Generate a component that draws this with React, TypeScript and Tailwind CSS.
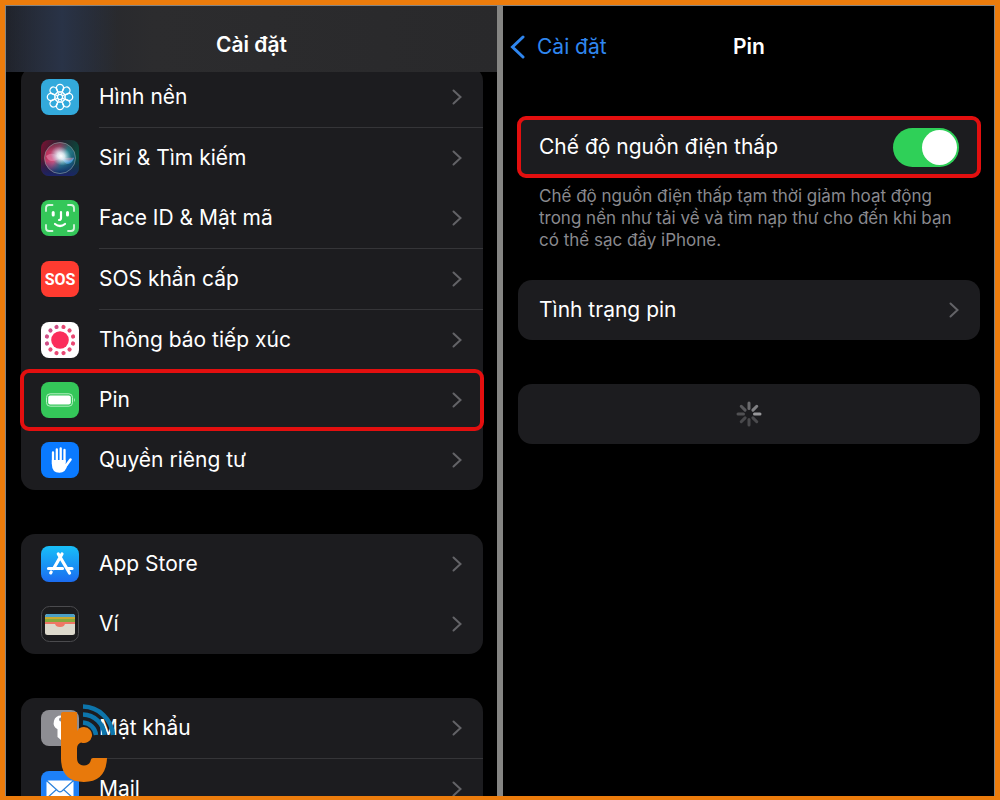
import { useState, type ReactNode } from "react";

const tile = "h-9 w-[38px] shrink-0";

function WallpaperIcon() {
  const petals = [0, 45, 90, 135, 180, 225, 270, 315];
  return (
    <svg viewBox="0 0 38 36" className={tile} aria-hidden="true">
      <rect width="38" height="36" rx="8" fill="#33aadc" />
      <g fill="none" stroke="#fff" strokeWidth="1.3">
        {petals.map((a) => (
          <ellipse key={a} cx="19" cy="9.2" rx="3.6" ry="3.9" transform={`rotate(${a} 19 18)`} />
        ))}
        {petals.map((a) => (
          <circle key={a} cx="19" cy="14.2" r="1.5" strokeWidth="0.8" transform={`rotate(${a} 19 18)`} />
        ))}
        <circle cx="19" cy="18" r="2.6" />
      </g>
    </svg>
  );
}

function SiriIcon() {
  return (
    <svg viewBox="0 0 38 36" className={tile} aria-hidden="true">
      <defs>
        <linearGradient id="siri-bg" x1="0" y1="0" x2="1" y2="0.3">
          <stop offset="0" stopColor="#7c1233" />
          <stop offset="0.5" stopColor="#25202f" />
          <stop offset="1" stopColor="#0b4a3c" />
        </linearGradient>
        <linearGradient id="siri-low" x1="0" y1="0" x2="0" y2="1">
          <stop offset="0.5" stopColor="#1b1c50" stopOpacity="0" />
          <stop offset="1" stopColor="#1c2468" />
        </linearGradient>
        <linearGradient id="siri-orb" x1="0" y1="0.2" x2="1" y2="0.6">
          <stop offset="0" stopColor="#b3264f" />
          <stop offset="0.4" stopColor="#cc5480" />
          <stop offset="0.65" stopColor="#2c8791" />
          <stop offset="1" stopColor="#124e67" />
        </linearGradient>
        <linearGradient id="siri-shade" x1="0" y1="0" x2="0" y2="1">
          <stop offset="0" stopColor="#21252c" stopOpacity="0.6" />
          <stop offset="0.3" stopColor="#21252c" stopOpacity="0" />
          <stop offset="0.6" stopColor="#1b3b80" stopOpacity="0" />
          <stop offset="1" stopColor="#112a62" />
        </linearGradient>
        <radialGradient id="siri-glow">
          <stop offset="0" stopColor="#fff" />
          <stop offset="0.35" stopColor="#ecf6fa" stopOpacity="0.85" />
          <stop offset="1" stopColor="#a9d6e8" stopOpacity="0" />
        </radialGradient>
      </defs>
      <rect width="38" height="36" rx="8" fill="url(#siri-bg)" />
      <rect width="38" height="36" rx="8" fill="url(#siri-low)" />
      <circle cx="19" cy="18" r="15.5" fill="url(#siri-orb)" />
      <circle cx="19" cy="18" r="15.5" fill="url(#siri-shade)" />
      <path d="M5 16c7-5 11 0 15 1 5 2 9 0 13 1-4 7-9 4-13 1-5 0-11 6-15-3Z" fill="#f295bd" opacity="0.5" />
      <path d="M21 17c6 6 10 3 12 0-1 8-10 10-12 0Z" fill="#4aa9ef" opacity="0.7" />
      <ellipse cx="20" cy="16" rx="11" ry="9" fill="url(#siri-glow)" transform="rotate(35 20 16)" />
      <circle cx="19" cy="18" r="15.5" fill="none" stroke="#91a1a5" strokeWidth="0.8" opacity="0.75" />
    </svg>
  );
}

function FaceIdIcon() {
  return (
    <svg viewBox="0 0 38 36" className={tile} aria-hidden="true">
      <rect width="38" height="36" rx="8" fill="#34c759" />
      <g fill="none" stroke="#fff" strokeLinecap="round">
        <path
          d="M5 11V8q0-3 3-3h3.5M27 5h3q3 0 3 3v3M33 25v3q0 3-3 3h-3M11.500 31H8q-3 0-3-3v-3"
          strokeWidth="1.8"
          opacity="0.8"
        />
        <path d="M12.2 12.500v2.500M26.500 12.500v2.500" strokeWidth="3" />
        <path d="M20 12v6q0 2-2 2M14 24q5 4 10 0" strokeWidth="2.200" />
      </g>
    </svg>
  );
}

function SosIcon() {
  return (
    <svg viewBox="0 0 38 36" className={tile} aria-hidden="true">
      <rect width="38" height="36" rx="8" fill="#ff3b30" />
      <text
        x="19"
        y="24"
        fill="#fff"
        textAnchor="middle"
        fontSize="16"
        fontWeight="700"
        fontFamily="Roboto, sans-serif"
      >
        SOS
      </text>
    </svg>
  );
}

function ExposureIcon() {
  return (
    <svg viewBox="0 0 38 36" className={tile} aria-hidden="true">
      <rect width="38" height="36" rx="8" fill="#fff" />
      <circle cx="19" cy="18" r="8.8" fill="#fb2d5b" />
      {Array.from({ length: 12 }, (_, i) => (
        <circle
          key={i}
          cx="19"
          cy="4.500"
          r="2.100"
          fill={i > 7 ? "#cf4d86" : "#e84873"}
          transform={`rotate(${15 + i * 30} 19 18)`}
        />
      ))}
    </svg>
  );
}

function BatteryIcon() {
  return (
    <svg viewBox="0 0 38 36" className={tile} aria-hidden="true">
      <rect width="38" height="36" rx="8" fill="#34c759" />
      <rect x="5.500" y="11.800" width="26" height="12.400" rx="3.600" fill="none" stroke="#b9efc6" />
      <rect x="7.200" y="13.500" width="22.600" height="9" rx="2" fill="#fff" />
      <path d="M33 15.800q1.800 2.200 0 4.400Z" fill="#b9efc6" />
    </svg>
  );
}

function PrivacyIcon() {
  return (
    <svg viewBox="0 0 38 36" className={tile} aria-hidden="true">
      <rect width="38" height="36" rx="8" fill="#0a7aff" />
      <g fill="none" stroke="#fff" strokeWidth="2.300" strokeLinecap="round">
        <path d="M12 10.500V22M15.800 7.500V20M19.700 6.300V20M23.500 8V20" />
        <path d="m25.500 23 4-5.500" strokeWidth="2.600" />
      </g>
      <path d="M10.850 18h13.800v4l1.800 1q-1.700 7.800-8 7.800-7.600 0-7.600-8.800Z" fill="#fff" />
    </svg>
  );
}

function AppStoreIcon() {
  return (
    <svg viewBox="0 0 38 36" className={tile} aria-hidden="true">
      <defs>
        <linearGradient id="store-bg" x1="0" y1="0" x2="0" y2="1">
          <stop offset="0" stopColor="#18bff8" />
          <stop offset="1" stopColor="#1b6cf0" />
        </linearGradient>
      </defs>
      <rect width="38" height="36" rx="8" fill="url(#store-bg)" />
      <g fill="none" stroke="#fff" strokeWidth="3.200" strokeLinecap="round">
        <path d="M17.300 8 28.500 27M21 8l-8.300 14.500M10.200 26l-.5.800" />
        <path d="M7.500 22.500h14M27 22.500h4" />
      </g>
    </svg>
  );
}

function WalletIcon() {
  return (
    <svg viewBox="0 0 38 36" className={tile} aria-hidden="true">
      <rect x="0.500" y="0.500" width="37" height="35" rx="8" fill="#1b1b1d" stroke="#4b4b4e" />
      <rect x="4" y="8" width="30" height="21" rx="2.500" fill="#ddd9cc" />
      <path d="M4 12v-1.500Q4 8 6.500 8h25Q34 8 34 10.500V12Z" fill="#4a9fc5" />
      <path d="M4 11h30v3H4Z" fill="#c9a92e" />
      <path d="M4 13h30v3H4Z" fill="#86a83c" />
      <path d="M4 16h30v2H4Z" fill="#ef7765" />
      <path d="M14 17h10q0 4-5 4t-5-4Z" fill="#ef7765" />
    </svg>
  );
}

function KeyIcon() {
  return (
    <svg viewBox="0 0 38 36" className={tile} aria-hidden="true">
      <rect width="38" height="36" rx="8" fill="#8e8e93" />
      <path d="M20 5.500a7.300 7.300 0 0 0-3.500 13.700V27l3.500 3 3-3v-3l-2-2 2-2v-1A7.300 7.300 0 0 0 20 5.500Z" fill="#fff" />
      <circle cx="20" cy="9.500" r="2" fill="#8e8e93" />
    </svg>
  );
}

function MailIcon() {
  return (
    <svg viewBox="0 0 38 36" className={tile} aria-hidden="true">
      <rect width="38" height="36" rx="8" fill="#1d80f7" />
      <rect x="5.500" y="9.500" width="27" height="18" rx="2" fill="#fff" />
      <path
        d="m6 10 11 10q2 1.600 4 0l11-10M6 27l9.500-8.500M32 27l-9.500-8.500"
        fill="none"
        stroke="#2c83dc"
        strokeWidth="1.200"
      />
    </svg>
  );
}

function Chevron() {
  return (
    <svg viewBox="0 0 10 16" className="h-4 w-[10px] shrink-0" aria-hidden="true">
      <path d="m1.500 1.500 7 6.500-7 6.500" fill="none" stroke="#636367" strokeWidth="2" strokeLinecap="round" />
    </svg>
  );
}

function Spinner() {
  const shades = ["#6a6a6d", "#808083", "#98989b", "#4a4a4d", "#49494c", "#48484b", "#505053", "#58585b"];
  return (
    <svg viewBox="0 0 26 26" className="size-[26px]" role="img" aria-label="Đang tải">
      {shades.map((shade, i) => (
        <path
          key={i}
          d="M13 2v5.500"
          stroke={shade}
          strokeWidth="3"
          strokeLinecap="round"
          transform={`rotate(${i * 45} 13 13)`}
        />
      ))}
    </svg>
  );
}

function Logo() {
  return (
    <svg
      viewBox="0 0 60 80"
      className="pointer-events-none absolute bottom-[13px] left-[53px] z-20 h-20 w-[60px]"
      aria-hidden="true"
    >
      <g fill="none" stroke="#0d75ab" strokeWidth="4.500">
        <path d="M24 3.500a31 31 0 0 1 30 28.500" />
        <path d="M24 11.500a22 22 0 0 1 21.500 20.500" />
        <path d="M24 19.500a14 14 0 0 1 13 12.500" />
      </g>
      <path
        d="M2 11Q2 9 4 9h13q1 0 1 1v18q2-4 7-4a8 8 0 1 1-3 15.400q-4 1.600-4 6v9q0 8 7 8 6 0 7-6 0-1.500 2-1.500h14q-1 24-23 24Q2 79 2 55Z"
        fill="#e8790b"
      />
    </svg>
  );
}

type Item = { label: string; icon: ReactNode; divider?: boolean; marked?: boolean };

const groups: Item[][] = [
  [
    { label: "Hình nền", icon: <WallpaperIcon />, divider: true },
    { label: "Siri & Tìm kiếm", icon: <SiriIcon /> },
    { label: "Face ID & Mật mã", icon: <FaceIdIcon />, divider: true },
    { label: "SOS khẩn cấp", icon: <SosIcon />, divider: true },
    { label: "Thông báo tiếp xúc", icon: <ExposureIcon /> },
    { label: "Pin", icon: <BatteryIcon />, marked: true },
    { label: "Quyền riêng tư", icon: <PrivacyIcon /> },
  ],
  [
    { label: "App Store", icon: <AppStoreIcon /> },
    { label: "Ví", icon: <WalletIcon /> },
  ],
  [
    { label: "Mật khẩu", icon: <KeyIcon />, divider: true },
    { label: "Mail", icon: <MailIcon /> },
  ],
];

function Row({ label, icon, divider, marked }: Item) {
  return (
    <li>
      <button
        type="button"
        className={`flex h-[60px] w-full items-center pr-[21px] pl-5 text-left ${
          marked ? "rounded-lg outline-4 -outline-offset-3 outline-[#e30f0f]" : ""
        }`}
      >
        {icon}
        <span className="ml-5 flex-1">{label}</span>
        <Chevron />
      </button>
      {divider && <div className="ml-[78px] h-px bg-[#353538]" />}
    </li>
  );
}

export default function App() {
  const [lowPower, setLowPower] = useState(true);

  return (
    <div className="h-screen overflow-hidden border-[5px] border-b-4 border-[#ec7c0c] bg-[#858583] font-['Inter','Noto_Sans',sans-serif] text-[21px] text-white">
      <div className="grid h-full grid-cols-2 gap-[6px] px-px pt-px">
        <section className="relative overflow-hidden bg-black">
          <header className="relative z-10 flex h-[66px] items-center justify-center bg-linear-to-r from-[#20232b] via-[#2c2c2e] via-30% to-[#29292b] pt-3">
            <div className="absolute inset-y-0 left-0 w-28 bg-linear-to-r from-transparent via-[#293347] to-transparent" />
            <h1 className="relative font-semibold">Cài đặt</h1>
          </header>
          <div className="-mt-[5px] flex flex-col gap-11 pr-[14px] pl-[15px]">
            {groups.map((items) => (
              <ul key={items[0].label} className="rounded-[14px] bg-[#1c1c1f]">
                {items.map((item) => (
                  <Row key={item.label} {...item} />
                ))}
              </ul>
            ))}
          </div>
          <Logo />
        </section>

        <section className="overflow-hidden bg-black pr-[14px] pl-[15px]">
          <header className="grid h-[82px] grid-cols-3 items-center">
            <a href="#settings" className="-ml-2 flex items-center gap-3 text-[#2f86ef]">
              <svg viewBox="0 0 15 24" className="h-6 w-[15px]" aria-hidden="true">
                <path d="M13 2 2.500 12 13 22" fill="none" stroke="currentColor" strokeWidth="3" strokeLinecap="round" />
              </svg>
              Cài đặt
            </a>
            <h2 className="text-center font-semibold">Pin</h2>
          </header>

          <label className="mt-[29px] flex h-[60px] items-center justify-between rounded-lg bg-[#1c1c1f] px-[21px] outline-4 -outline-offset-3 outline-[#e30f0f]">
            Chế độ nguồn điện thấp
            <input
              type="checkbox"
              role="switch"
              checked={lowPower}
              onChange={(e) => setLowPower(e.target.checked)}
              className="h-[39px] w-[66px] appearance-none rounded-full bg-[#39393d] p-[2px] before:block before:size-[35px] before:rounded-full before:bg-white checked:bg-[#2fd058] checked:before:ml-auto"
            />
          </label>
          <p className="mt-2 px-[21px] text-[17px] leading-[22px] text-[#89898e]">
            Chế độ nguồn điện thấp tạm thời giảm hoạt động trong nền như tải về và tìm nạp thư cho đến khi bạn có thể sạc
            đầy iPhone.
          </p>

          <button
            type="button"
            className="mt-[29px] flex h-[60px] w-full items-center justify-between rounded-[14px] bg-[#1c1c1f] px-[21px]"
          >
            Tình trạng pin
            <Chevron />
          </button>
          <div className="mt-11 flex h-[60px] items-center justify-center rounded-[14px] bg-[#1c1c1f]">
            <Spinner />
          </div>
        </section>
      </div>
    </div>
  );
}
